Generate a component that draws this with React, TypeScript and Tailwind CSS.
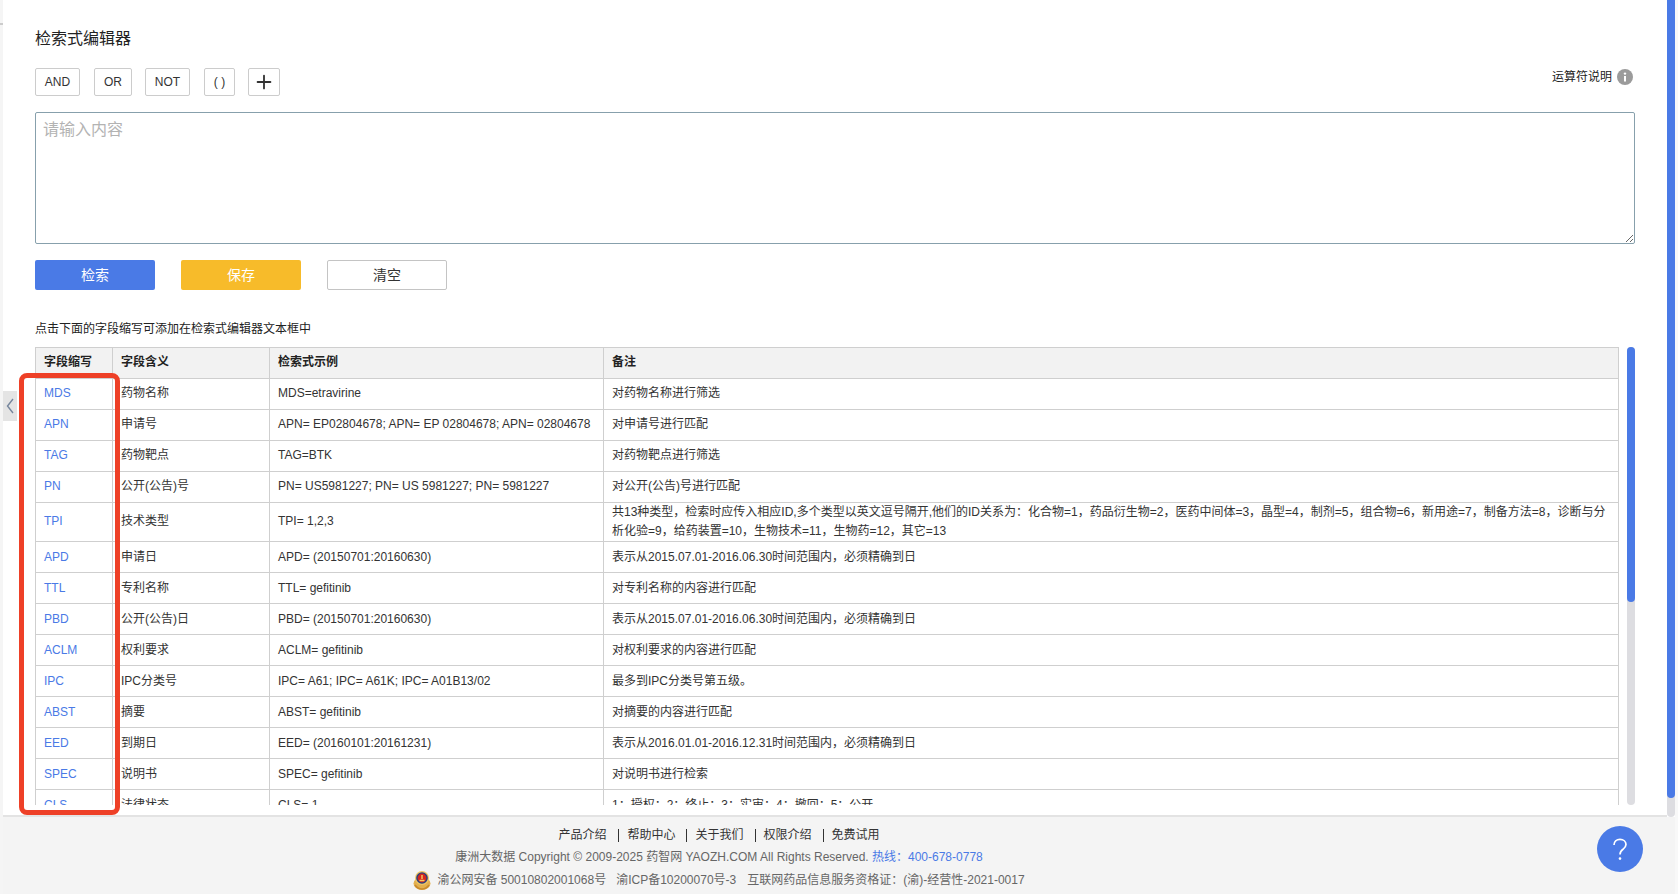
import { Plus } from 'lucide-react';

type Row = { code: string; name: string; example: string; note: string };

const rows: Row[] = [
  { code: 'MDS', name: '药物名称', example: 'MDS=etravirine', note: '对药物名称进行筛选' },
  { code: 'APN', name: '申请号', example: 'APN= EP02804678; APN= EP 02804678; APN= 02804678', note: '对申请号进行匹配' },
  { code: 'TAG', name: '药物靶点', example: 'TAG=BTK', note: '对药物靶点进行筛选' },
  { code: 'PN', name: '公开(公告)号', example: 'PN= US5981227; PN= US 5981227; PN= 5981227', note: '对公开(公告)号进行匹配' },
  {
    code: 'TPI',
    name: '技术类型',
    example: 'TPI= 1,2,3',
    note: '共13种类型，检索时应传入相应ID,多个类型以英文逗号隔开,他们的ID关系为：化合物=1，药品衍生物=2，医药中间体=3，晶型=4，制剂=5，组合物=6，新用途=7，制备方法=8，诊断与分析化验=9，给药装置=10，生物技术=11，生物药=12，其它=13',
  },
  { code: 'APD', name: '申请日', example: 'APD= (20150701:20160630)', note: '表示从2015.07.01-2016.06.30时间范围内，必须精确到日' },
  { code: 'TTL', name: '专利名称', example: 'TTL= gefitinib', note: '对专利名称的内容进行匹配' },
  { code: 'PBD', name: '公开(公告)日', example: 'PBD= (20150701:20160630)', note: '表示从2015.07.01-2016.06.30时间范围内，必须精确到日' },
  { code: 'ACLM', name: '权利要求', example: 'ACLM= gefitinib', note: '对权利要求的内容进行匹配' },
  { code: 'IPC', name: 'IPC分类号', example: 'IPC= A61; IPC= A61K; IPC= A01B13/02', note: '最多到IPC分类号第五级。' },
  { code: 'ABST', name: '摘要', example: 'ABST= gefitinib', note: '对摘要的内容进行匹配' },
  { code: 'EED', name: '到期日', example: 'EED= (20160101:20161231)', note: '表示从2016.01.01-2016.12.31时间范围内，必须精确到日' },
  { code: 'SPEC', name: '说明书', example: 'SPEC= gefitinib', note: '对说明书进行检索' },
  { code: 'CLS', name: '法律状态', example: 'CLS= 1', note: '1：授权；2：终止；3：实审；4：撤回；5：公开' },
];

const cell = 'border border-[#cfcfcf] px-2 pt-0 text-left align-middle';

const OpButton = ({ label, width, gap }: { label: string; width: string; gap: string }) => (
  <button className={`${width} ${gap} h-[28px] border border-[#cccccc] rounded-[2px] text-xs text-[#333333] bg-white`}>
    {label}
  </button>
);

const FieldTable = () => (
  <table className="w-[1584px] table-fixed border-collapse text-xs text-[#333333] leading-[19px]">
    <colgroup>
      <col className="w-[77px]" />
      <col className="w-[157px]" />
      <col className="w-[334px]" />
      <col />
    </colgroup>
    <thead>
      <tr className="h-[31px] bg-[#f2f2f2] font-bold text-[#222222]">
        <th className={`${cell} pb-px`}>字段缩写</th>
        <th className={`${cell} pb-px`}>字段含义</th>
        <th className={`${cell} pb-px`}>检索式示例</th>
        <th className={`${cell} pb-px`}>备注</th>
      </tr>
    </thead>
    <tbody>
      {rows.map((row, i) => {
        const pad = i < 5 ? 'pb-px' : 'pb-0';
        return (
          <tr key={row.code} className="h-[31px]">
            <td className={`${cell} ${pad} text-[#4a7ae6]`}>{row.code}</td>
            <td className={`${cell} ${pad}`}>{row.name}</td>
            <td className={`${cell} ${pad}`}>{row.example}</td>
            <td className={`${cell} ${row.note.length > 60 ? 'pb-0' : pad}`}>{row.note}</td>
          </tr>
        );
      })}
    </tbody>
  </table>
);

const PoliceBadge = () => (
  <svg width="18" height="20" viewBox="0 0 18 20" className="mr-[6px] shrink-0">
    <ellipse cx="9" cy="13.5" rx="8.5" ry="6.5" fill="#e3b04f" />
    <path d="M2 15c2 3 4 4 7 4s5-1 7-4" fill="none" stroke="#c98a2c" strokeWidth="1.5" />
    <circle cx="9" cy="8" r="7" fill="#f0c765" />
    <circle cx="9" cy="8" r="5.8" fill="#27407f" />
    <circle cx="9" cy="8" r="4.4" fill="#d5271f" />
    <path d="M6.5 10.5h5M9 5v4" stroke="#f5cf5c" strokeWidth="1.4" />
  </svg>
);

const Footer = () => (
  <footer className="relative h-[77px] bg-[#f4f4f4]">
    <div className="w-[1432px] pt-[9px] text-center text-xs leading-[18px] text-[#666666]">
      <div className="flex justify-center text-[#333333]">
        <a className="pr-[12px]">产品介绍</a>
        <div className="mt-[3px] h-[13px] w-px bg-[#333333]" />
        <a className="pl-[8px] pr-[11px]">帮助中心</a>
        <div className="mt-[3px] h-[13px] w-px bg-[#333333]" />
        <a className="pl-[8px] pr-[11px]">关于我们</a>
        <div className="mt-[3px] h-[13px] w-px bg-[#333333]" />
        <a className="pl-[8px] pr-[11px]">权限介绍</a>
        <div className="mt-[3px] h-[13px] w-px bg-[#333333]" />
        <a className="pl-[8px]">免费试用</a>
      </div>
      <div className="mt-[4px]">
        康洲大数据 Copyright © 2009-2025 药智网 YAOZH.COM All Rights Reserved. <span className="text-[#4a7ae6]">热线：400-678-0778</span>
      </div>
      <div className="mt-[4px] flex justify-center items-center">
        <PoliceBadge />
        <span>渝公网安备 50010802001068号</span>
        <span className="ml-[10px]">渝ICP备10200070号-3</span>
        <span className="ml-[11px]">互联网药品信息服务资格证：(渝)-经营性-2021-0017</span>
      </div>
    </div>
    <button className="absolute left-[1594px] top-[9px] h-[46px] w-[46px] rounded-full bg-[#4a7ae6]">
      <svg width="46" height="46" viewBox="0 0 46 46" fill="none">
        <path d="M17 19c0-3.4 2.6-5.6 6-5.6s6 2.2 6 5.2c0 2.2-1.2 3.3-3 4.7-1.9 1.4-3 2.6-3 5.2" stroke="#ffffff" strokeWidth="1.7" />
        <circle cx="23" cy="32.6" r="1.3" fill="#ffffff" />
      </svg>
    </button>
  </footer>
);

export default function App() {
  return (
    <div className="relative flex h-screen overflow-hidden bg-white font-['Liberation_Sans','Noto_Sans_CJK_SC',sans-serif]">
      <div className="w-[3px] shrink-0 bg-[#f5f5f5] pt-[23px]">
        <div className="h-[2px] bg-[#cccccc]" />
      </div>

      <div className="flex w-[1672px] shrink-0 flex-col">
        <div className="flex h-[817px]">
          <main className="flex w-[1664px] flex-col border-b-2 border-[#e3e3e3] pl-[32px] pr-[32px] pt-[27px]">
            <h1 className="h-[24px] text-base leading-[24px] text-[#222222]">检索式编辑器</h1>

            <div className="mt-[17px] flex items-start">
              <OpButton label="AND" width="w-[45px]" gap="" />
              <OpButton label="OR" width="w-[38px]" gap="ml-[14px]" />
              <OpButton label="NOT" width="w-[45px]" gap="ml-[13px]" />
              <OpButton label="( )" width="w-[31px]" gap="ml-[14px]" />
              <button className="ml-[13px] flex h-[28px] w-[32px] items-center justify-center rounded-[2px] border border-[#cccccc] bg-white text-[#333333]">
                <Plus size={22} strokeWidth={2} />
              </button>
              <div className="ml-auto mr-[2px] mt-px flex h-[16px] items-center text-xs text-[#222222]">
                运算符说明
                <svg width="16" height="16" viewBox="0 0 16 16" className="ml-[5px]">
                  <circle cx="8" cy="8" r="8" fill="#9b9b9b" />
                  <rect x="7" y="7" width="2" height="5.5" fill="#ffffff" />
                  <circle cx="8" cy="4.6" r="1.2" fill="#ffffff" />
                </svg>
              </div>
            </div>

            <textarea
              placeholder="请输入内容"
              className="mt-[16px] h-[132px] w-full shrink-0 rounded-[2px] border border-[#87a0ac] px-[7px] py-[5px] text-base text-[#333333] placeholder:text-[#b3b3b3] outline-none"
            />

            <div className="mt-[16px] flex gap-[26px] text-sm">
              <button className="h-[30px] w-[120px] rounded-[2px] bg-[#4a7ae6] text-white">检索</button>
              <button className="h-[30px] w-[120px] rounded-[2px] bg-[#f7bb2a] text-white">保存</button>
              <button className="h-[30px] w-[120px] rounded-[2px] border border-[#c4c4c4] bg-white text-[#333333]">清空</button>
            </div>

            <p className="mt-[30px] text-xs leading-[18px] text-[#222222]">点击下面的字段缩写可添加在检索式编辑器文本框中</p>

            <div className="mb-[10px] mt-[9px] flex min-h-0 flex-1 gap-[8px]">
              <div className="min-w-0 flex-1 overflow-hidden">
                <FieldTable />
              </div>
              <div className="w-[8px] shrink-0 rounded-full bg-[#dddde1]">
                <div className="h-[255px] rounded-full bg-[#4a7ae6]" />
              </div>
            </div>
          </main>

          <div className="w-[8px] shrink-0 rounded-b-full bg-[#dddde1]">
            <div className="h-[798px] rounded-b-full bg-[#4a7ae6]" />
          </div>
        </div>
        <Footer />
      </div>

      <div className="w-[3px] shrink-0 bg-[#f8f8f8]" />

      {/* 折叠按钮和红色标注框盖在内容上 */}
      <button className="absolute left-[3px] top-[391px] flex h-[30px] w-[14px] items-center justify-center bg-[#e4e4e4]">
        <svg width="8" height="16" viewBox="0 0 8 16" fill="none">
          <path d="M7 1L1.5 8L7 15" stroke="#75859c" strokeWidth="1.4" />
        </svg>
      </button>
      <div className="pointer-events-none absolute left-[19px] top-[373px] h-[442px] w-[101px] rounded-[8px] border-[5px] border-[#ee4027]" />
    </div>
  );
}
